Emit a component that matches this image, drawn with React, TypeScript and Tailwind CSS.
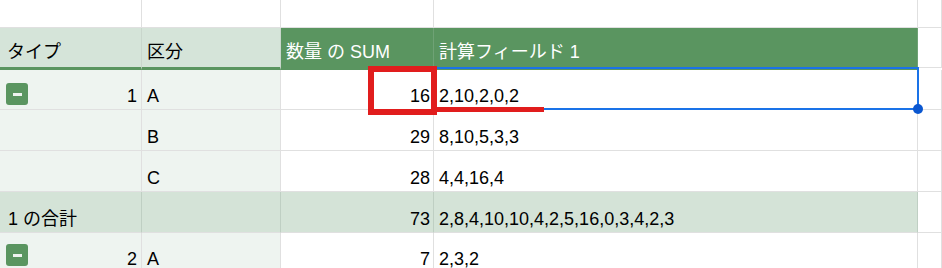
import type { ReactNode } from 'react'
import clsx from 'clsx'

const font = 'font-["Liberation_Sans","Noto_Sans_CJK_JP",sans-serif]'

const grid = 'grid grid-cols-[142px_139px_153px_484px_1fr]'
const text = 'text-[18px] leading-[22px]'

// light green side cells of the pivot table
const side = 'bg-[#eef4f0]'
const headLight = 'bg-[#d5e4d9] text-black border-b-[3px] border-b-[#5a9560] border-r border-r-[#c9d6cc]'
const headDark = 'bg-[#5a9560] text-white border-b-[3px] border-b-[#5a9560] border-r border-r-[#6fa275]'
const total = 'bg-[#d4e3d7] border-b border-b-[#e0e0e0] border-r border-r-[#bfcfc3]'

function Cell({
  children,
  className,
  right,
}: {
  children?: ReactNode
  className?: string
  right?: boolean
}) {
  return (
    <div
      className={clsx(
        'flex items-end overflow-hidden whitespace-nowrap pb-[2px]',
        text,
        right ? 'justify-end pr-[3px]' : 'pl-[5px]',
        className ?? 'border-b border-r border-[#e0e0e0] bg-white',
      )}
    >
      {children}
    </div>
  )
}

function Collapse() {
  return (
    <span className="mb-[2px] flex h-[22px] w-[22px] items-center justify-center rounded-[3px] bg-[#5a9560]">
      <span className="h-[3px] w-[9px] bg-[#eef3ef]" />
    </span>
  )
}

interface Row {
  type?: string
  collapse?: boolean
  part: string
  sum: number
  field: string
}

const rows: Row[] = [
  { type: '1', collapse: true, part: 'A', sum: 16, field: '2,10,2,0,2' },
  { part: 'B', sum: 29, field: '8,10,5,3,3' },
  { part: 'C', sum: 28, field: '4,4,16,4' },
]

function DataRow({ row, h, last }: { row: Row; h: string; last?: boolean }) {
  // the last row runs past the window, so it has no bottom gridline
  const line = last ? 'border-r border-[#e0e0e0] !pb-0 !leading-[18px]' : 'border-b border-r border-[#e0e0e0]'
  const sideCell = `${side} ${line}`
  return (
    <div className={clsx(grid, h)}>
      <div className={clsx('flex items-end justify-between pl-[6px] pr-[4px] pb-[2px]', text, sideCell)}>
        {row.collapse ? <Collapse /> : <span />}
        <span>{row.type}</span>
      </div>
      <Cell className={sideCell}>{row.part}</Cell>
      <Cell right className={`bg-white ${line}`}>{row.sum}</Cell>
      <Cell className={`bg-white ${line}`}>{row.field}</Cell>
      <Cell className={`bg-white ${line}`} />
    </div>
  )
}

export default function App() {
  return (
    <div className={clsx('relative h-[268px] w-[942px] overflow-hidden bg-white text-black', font)}>
      <div className={clsx(grid, 'h-[28px]')}>
        <Cell />
        <Cell />
        <Cell />
        <Cell />
        <Cell />
      </div>

      <div className={clsx(grid, 'h-[42px]')}>
        <div className={clsx('flex items-end pb-[4px] pl-[7px]', text, headLight)}>タイプ</div>
        <div className={clsx('flex items-end pb-[4px] pl-[5px]', text, headLight)}>区分</div>
        <div className={clsx('flex items-end pb-[4px] pl-[5px]', text, headDark)}>数量 の SUM</div>
        <div className={clsx('flex items-end pb-[4px] pl-[5px]', text, headDark)}>計算フィールド 1</div>
        <div className="mb-[2px] border-b border-r border-[#e0e0e0] bg-white" />
      </div>

      <DataRow row={rows[0]} h="h-[40px]" />
      <DataRow row={rows[1]} h="h-[41px]" />
      <DataRow row={rows[2]} h="h-[41px]" />

      <div className={clsx(grid, 'h-[41px]')}>
        <Cell className={clsx(total, 'pl-[8px]')}>1 の合計</Cell>
        <Cell className={total} />
        <Cell className={total} right>73</Cell>
        <Cell className={total}>2,8,4,10,10,4,2,5,16,0,3,4,2,3</Cell>
        <Cell />
      </div>

      <DataRow row={{ type: '2', collapse: true, part: 'A', sum: 7, field: '2,3,2' }} h="h-[35px]" last />

      {/* active cell outline with its fill handle */}
      <div className="pointer-events-none absolute left-[433px] top-[67px] h-[43px] w-[486px] border-2 border-[#1a73e8]">
        <span className="absolute -bottom-[6px] -right-[6px] h-[10px] w-[10px] rounded-full bg-[#0b57d0]" />
      </div>

      {/* red highlight markers */}
      <div className="pointer-events-none absolute left-[368px] top-[66px] h-[49px] w-[69px] border-[6px] border-[#e11d1d]" />
      <div className="pointer-events-none absolute left-[437px] top-[107px] h-[5px] w-[107px] bg-[#e11d1d]" />
    </div>
  )
}
